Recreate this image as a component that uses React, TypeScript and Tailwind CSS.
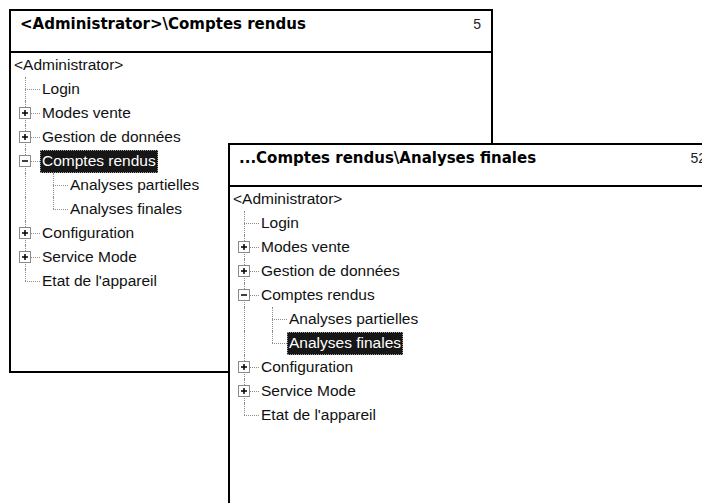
import React from 'react';

type Node = {
  label: string;
  expand?: 'plus' | 'minus';
  children?: Node[];
};

const TREE: Node[] = [
  { label: 'Login' },
  { label: 'Modes vente', expand: 'plus' },
  { label: 'Gestion de données', expand: 'plus' },
  {
    label: 'Comptes rendus',
    expand: 'minus',
    children: [{ label: 'Analyses partielles' }, { label: 'Analyses finales' }],
  },
  { label: 'Configuration', expand: 'plus' },
  { label: 'Service Mode', expand: 'plus' },
  { label: "Etat de l'appareil" },
];

// expander box drawn like the old win32 tree control
const Expander = ({ kind }: { kind: 'plus' | 'minus' }) => (
  <svg width="12" height="12" viewBox="0 0 12 12" className="absolute left-[8px] top-1/2 -translate-y-1/2">
    <rect x="0.5" y="0.5" width="11" height="11" fill="#fff" stroke="#8a8a8a" />
    <path d="M3 6h6" stroke="#000" strokeWidth="1.5" />
    {kind === 'plus' && <path d="M6 3v6" stroke="#000" strokeWidth="1.5" />}
  </svg>
);

// one indentation cell with the dotted guide lines
const Guide = ({ branch, last, through, expand }: {
  branch?: boolean;
  last?: boolean;
  through?: boolean;
  expand?: 'plus' | 'minus';
}) => (
  <div className="relative w-[28px] h-full shrink-0">
    {(through || (branch && !last)) && (
      <div className="absolute left-[14px] top-0 bottom-0 border-l border-dotted border-[#8c8c8c]" />
    )}
    {branch && last && (
      <div className="absolute left-[14px] top-0 h-1/2 border-l border-dotted border-[#8c8c8c]" />
    )}
    {branch && (
      <div className="absolute left-[14px] right-[-1px] top-1/2 border-t border-dotted border-[#8c8c8c]" />
    )}
    {expand && <Expander kind={expand} />}
  </div>
);

const Label = ({ text, selected }: { text: string; selected?: boolean }) => (
  <span
    className={
      selected
        ? 'ml-[1px] h-[23px] flex items-center px-[2px] bg-[#161616] text-white outline outline-1 outline-dotted outline-[#9a9a9a] -outline-offset-1'
        : 'ml-[1px] h-[23px] flex items-center px-[2px] text-[#111]'
    }
  >
    {text}
  </span>
);

const Tree = ({ selected }: { selected: string }) => (
  <div className="text-[15.5px] leading-none">
    <div className="h-[24px] flex items-center pl-[3px] text-[#111]">&lt;Administrator&gt;</div>
    {TREE.map((node, i) => {
      const last = i === TREE.length - 1;
      return (
        <React.Fragment key={node.label}>
          <div className="h-[24px] flex items-center">
            <Guide branch last={last} expand={node.expand} />
            <Label text={node.label} selected={selected === node.label} />
          </div>
          {node.children?.map((c, j) => (
            <div key={c.label} className="h-[24px] flex items-center">
              <Guide through={!last} />
              <Guide branch last={j === node.children!.length - 1} />
              <Label text={c.label} selected={selected === c.label} />
            </div>
          ))}
        </React.Fragment>
      );
    })}
  </div>
);

const Window = ({ title, count, selected, className }: {
  title: string;
  count: string;
  selected: string;
  className: string;
}) => (
  <div className={`absolute bg-white border-2 border-black flex flex-col ${className}`}>
    <div className="h-[42px] shrink-0 border-b-2 border-black flex items-start justify-between pl-[9px] pr-[10px] pt-[4px]">
      <span
        className="font-bold text-[15px] leading-[18px] text-black"
        style={{ fontFamily: '"DejaVu Sans", Verdana, sans-serif' }}
      >
        {title}
      </span>
      <span className="text-[14px] leading-[18px] text-[#222]">{count}</span>
    </div>
    <div className="flex-1 overflow-hidden">
      <Tree selected={selected} />
    </div>
  </div>
);

export default function App() {
  return (
    <div
      className="relative w-[702px] h-[503px] overflow-hidden bg-white"
      style={{ fontFamily: '"Liberation Sans", Arial, sans-serif' }}
    >
      <Window
        title="<Administrator>\Comptes rendus"
        count="5"
        selected="Comptes rendus"
        className="left-[9px] top-[9px] w-[484px] h-[364px]"
      />
      <Window
        title="...Comptes rendus\Analyses finales"
        count="52"
        selected="Analyses finales"
        className="left-[228px] top-[143px] w-[490px] h-[364px]"
      />
    </div>
  );
}
